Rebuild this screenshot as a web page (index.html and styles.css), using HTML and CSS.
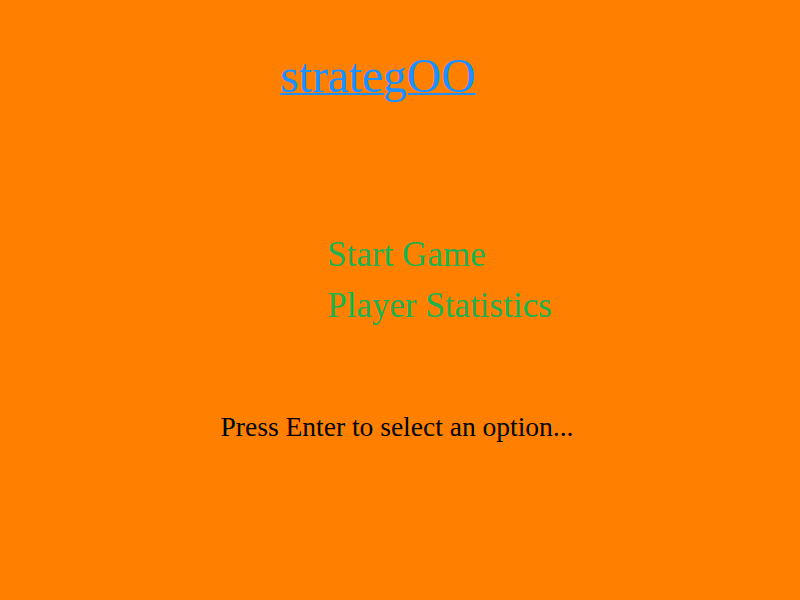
FILE: index.html
```html
<!DOCTYPE html>
<html lang="en">
<head>
  <meta charset="UTF-8">
  <title>strategOO</title>
  <link rel="stylesheet" href="styles.css">
</head>
<body>
  <div class="screen">
    <h1 class="title"><a href="#">strategOO</a></h1>
    <ul class="menu">
      <li>Start Game</li>
      <li>Player Statistics</li>
    </ul>
    <p class="hint">Press Enter to select an option...</p>
  </div>
</body>
</html>
```

FILE: styles.css
```css
body {
  margin: 0;
  background: #ff8000;
  font-family: "Liberation Serif", "Times New Roman", serif;
}
.screen {
  width: 800px;
  height: 600px;
  display: flex;
  flex-direction: column;
}
.title {
  margin: 48px 0 0 280px;
  font-size: 47.5px;
  font-weight: normal;
  line-height: 56px;
}
.title a {
  color: #1e90ff;
  text-decoration: underline;
  text-decoration-thickness: 2px;
}
.menu {
  list-style: none;
  margin: 125px 0 0 327px;
  padding: 0;
  font-size: 35px;
  line-height: 51px;
  color: #22b14c;
}
.hint {
  margin: 80px 6px 0 0;
  text-align: center;
  font-size: 27.5px;
  line-height: 32px;
  color: #000;
}
```
